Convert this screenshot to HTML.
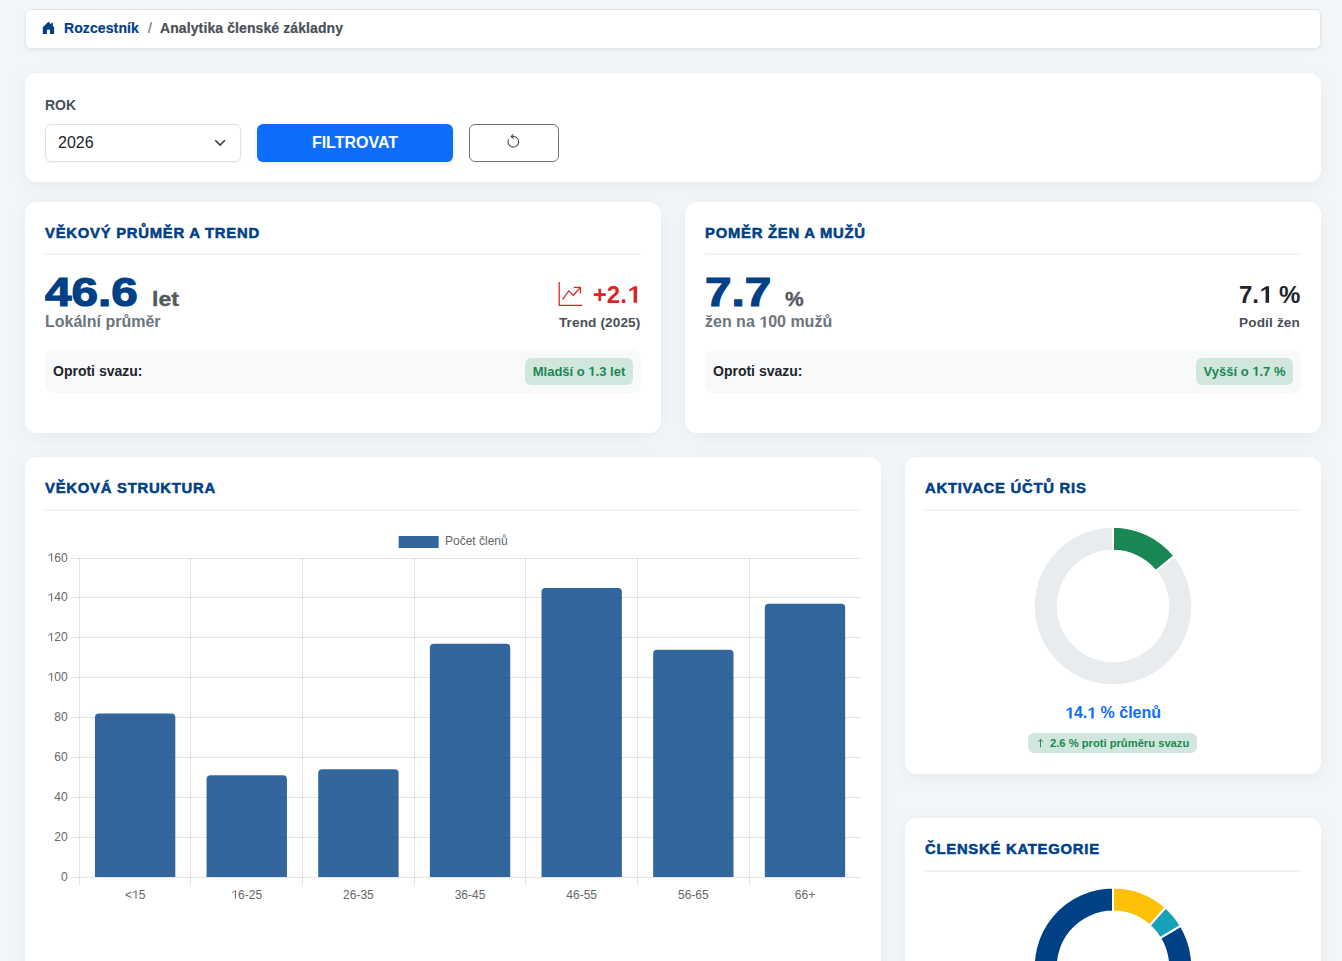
<!DOCTYPE html>
<html lang="cs">
<head>
<meta charset="utf-8">
<style>
*{box-sizing:border-box;margin:0;padding:0}
html,body{width:1342px;height:961px;overflow:hidden}
body{background:#f3f6f9;font-family:"Liberation Sans",sans-serif;color:#212529;position:relative}
.card{position:absolute;background:#fff;border-radius:12px;box-shadow:0 4px 20px rgba(0,0,0,0.05)}
.abs{position:absolute;white-space:nowrap}
.bc{left:25px;top:9px;width:1296px;height:40px;border-radius:6px;border:1px solid #e4e7eb;box-shadow:0 2px 4px rgba(0,0,0,0.05)}
.bc .t{font-size:14px;font-weight:bold;line-height:16px;top:11px;-webkit-text-stroke:0.2px currentColor;letter-spacing:0.1px}
.ttl{font-size:14px;font-weight:bold;color:#004085;letter-spacing:0.7px;line-height:17px;-webkit-text-stroke:0.5px #004085;transform:scaleX(1.06);transform-origin:0 0}
.sep{position:absolute;height:2px;background:#f1f4f7}
.big{font-weight:bold;color:#004085;font-size:40px;line-height:48px;-webkit-text-stroke:1.2px #004085;transform:scaleX(1.19);transform-origin:0 0}
.unit{font-weight:bold;color:#55595f;font-size:20px;line-height:24px;-webkit-text-stroke:0.4px #55595f;transform-origin:0 0}
.sub{font-size:16px;font-weight:bold;color:#6c757d;line-height:18px}
.gbox{position:absolute;background:#f8f9fa;border-radius:8px}
.badge{position:absolute;background:#d1e7dd;color:#198754;border-radius:6px;font-size:13px;font-weight:bold;line-height:27px;text-align:center}
.one{position:relative;color:transparent!important;-webkit-text-stroke:0!important}.one svg{position:absolute;left:0;top:0;width:0.556em;height:0.905em;overflow:visible}
</style>
</head>
<body>
<!-- breadcrumb -->
<div class="card bc">
  <svg class="abs" style="left:0;top:0;overflow:visible" width="40" height="40" viewBox="26 10 40 40"><path fill="#004085" d="M48.4 21.8 L42.8 27.2 V33.9 H46.9 V29.7 H50 V33.9 H54.1 V27.2 L52.9 26 V22.8 H51.4 V24.6 Z"/></svg>
  <span class="abs t" style="left:38px;top:10px;color:#004085">Rozcestník</span>
  <span class="abs t" style="left:122px;top:10px;color:#6c757d;font-weight:normal">/</span>
  <span class="abs t" style="left:134px;top:10px;color:#495057">Analytika členské základny</span>
</div>

<!-- filter -->
<div class="card" style="left:25px;top:73px;width:1296px;height:109px">
  <span class="abs" style="left:20px;top:24px;font-size:14px;font-weight:bold;color:#495057;line-height:16px">ROK</span>
  <div class="abs" style="left:20px;top:51px;width:196px;height:38px;border:1px solid #dee2e6;border-radius:6px;box-shadow:0 1px 2px rgba(0,0,0,0.05)">
    <span class="abs" style="left:12px;top:9px;font-size:16px;line-height:18px;color:#212529">2026</span>
    <svg class="abs" style="left:168px;top:14px" width="12" height="9" viewBox="0 0 12 9"><path d="M1.3 1.2L6.1 6.1L10.9 1.2" fill="none" stroke="#343a40" stroke-width="1.5"/></svg>
  </div>
  <div class="abs" style="left:232px;top:51px;width:196px;height:38px;background:#0d6efd;border-radius:6px;box-shadow:0 2px 4px rgba(0,0,0,0.08);color:#fff;font-weight:bold;font-size:16px;line-height:38px;text-align:center">FILTROVAT</div>
  <div class="abs" style="left:444px;top:51px;width:90px;height:38px;border:1px solid #6c757d;border-radius:6px">
    
  </div>
</div>

<!-- card age -->
<div class="card" style="left:25px;top:202px;width:636px;height:231px">
  <span class="abs ttl" style="left:20px;top:22.5px">VĚKOVÝ PRŮMĚR A TREND</span>
  <div class="sep" style="left:20px;top:51px;width:596px"></div>
  <span class="abs big" style="left:20px;top:65.5px">46.6</span>
  <span class="abs unit" style="left:127px;top:84.5px;transform:scaleX(1.15)">let</span>
  <span class="abs sub" style="left:20px;top:111px">Lokální průměr</span>
  
  <span class="abs" style="right:20.8px;top:79px;font-size:24px;font-weight:bold;color:#dc2626;line-height:28px">+2.<span class="one">1<svg viewBox="0 -1854 1139 1854"><path fill="#dc2626" d="M560 0H860V-1409H630L200-1140V-930L560-1150Z"/></svg></span></span>
  <span class="abs" style="right:20.6px;top:113px;font-size:13.6px;font-weight:bold;color:#495057;line-height:16px;letter-spacing:0.12px">Trend (2025)</span>
  <div class="gbox" style="left:20px;top:148px;width:596px;height:43px">
    <span class="abs" style="left:8px;top:13px;font-size:14px;font-weight:bold;line-height:16px;color:#212529">Oproti svazu:</span>
    <div class="badge" style="right:8px;top:8px;width:108px;height:27px">Mladší o <span class="one">1<svg viewBox="0 -1854 1139 1854"><path fill="#198754" d="M560 0H860V-1409H630L200-1140V-930L560-1150Z"/></svg></span>.3 let</div>
  </div>
</div>

<!-- card ratio -->
<div class="card" style="left:685px;top:202px;width:636px;height:231px">
  <span class="abs ttl" style="left:20px;top:22.5px">POMĚR ŽEN A MUŽŮ</span>
  <div class="sep" style="left:20px;top:51px;width:596px"></div>
  <span class="abs big" style="left:20px;top:65.5px">7.7</span>
  <span class="abs unit" style="left:100px;top:84.5px;transform:scaleX(1.05)">%</span>
  <span class="abs sub" style="left:20px;top:111px">žen na <span class="one">1<svg viewBox="0 -1854 1139 1854"><path fill="#6c757d" d="M560 0H860V-1409H630L200-1140V-930L560-1150Z"/></svg></span>00 mužů</span>
  <span class="abs" style="right:20.6px;top:79px;font-size:24px;font-weight:bold;color:#212529;line-height:28px">7.<span class="one">1<svg viewBox="0 -1854 1139 1854"><path fill="#212529" d="M560 0H860V-1409H630L200-1140V-930L560-1150Z"/></svg></span> %</span>
  <span class="abs" style="right:21px;top:113px;font-size:13.6px;font-weight:bold;color:#495057;line-height:16px;letter-spacing:0.15px">Podíl žen</span>
  <div class="gbox" style="left:20px;top:148px;width:596px;height:43px">
    <span class="abs" style="left:8px;top:13px;font-size:14px;font-weight:bold;line-height:16px;color:#212529">Oproti svazu:</span>
    <div class="badge" style="right:8px;top:8px;width:97px;height:27px">Vyšší o <span class="one">1<svg viewBox="0 -1854 1139 1854"><path fill="#198754" d="M560 0H860V-1409H630L200-1140V-930L560-1150Z"/></svg></span>.7 %</div>
  </div>
</div>

<!-- chart card -->
<div class="card" style="left:25px;top:457px;width:856px;height:560px">
  <span class="abs ttl" style="left:20px;top:22.5px">VĚKOVÁ STRUKTURA</span>
  <div class="sep" style="left:20px;top:52px;width:816px"></div>
</div>

<!-- activation card -->
<div class="card" style="left:905px;top:457px;width:416px;height:317px">
  <span class="abs ttl" style="left:20px;top:22.5px">AKTIVACE ÚČTŮ RIS</span>
  <div class="sep" style="left:20px;top:52px;width:376px"></div>
  <span class="abs" style="left:0;width:416px;text-align:center;top:247.3px;font-size:16px;font-weight:bold;color:#0d6efd;line-height:18px"><span class="one">1<svg viewBox="0 -1854 1139 1854"><path fill="#0d6efd" d="M560 0H860V-1409H630L200-1140V-930L560-1150Z"/></svg></span>4.<span class="one">1<svg viewBox="0 -1854 1139 1854"><path fill="#0d6efd" d="M560 0H860V-1409H630L200-1140V-930L560-1150Z"/></svg></span> % členů</span>
  <div class="abs" style="left:123px;top:276px;width:169px;height:20px;background:#d1e7dd;border-radius:6px;color:#198754;font-size:11.2px;font-weight:bold;line-height:20px">
    <svg class="abs" style="left:9px;top:4.5px" width="7" height="10" viewBox="0 0 7 10"><path d="M3.5 9.3V1.3M1 3.8L3.5 1.3L6 3.8" fill="none" stroke="#198754" stroke-width="0.95"/></svg>
    <span class="abs" style="left:22px;top:0">2.6 % proti průměru svazu</span></div>
</div>

<!-- categories card -->
<div class="card" style="left:905px;top:818px;width:416px;height:300px">
  <span class="abs ttl" style="left:20px;top:22.5px">ČLENSKÉ KATEGORIE</span>
  <div class="sep" style="left:20px;top:52px;width:376px"></div>
</div>

<svg class="ov" width="1342" height="961" viewBox="0 0 1342 961" style="position:absolute;left:0;top:0;z-index:5" font-family="Liberation Sans" font-size="12" fill="#666">
<g fill="none" stroke="#dc2626" stroke-width="1.3" stroke-linecap="butt">
<path d="M559.2 282 V305.3 H582.3"/>
<path d="M562.6 299.6 L568.7 290.9 L573.4 295.3 L580.2 287.6"/>
<path d="M573.8 287.3 H580.4 V293.6"/>
</g>
<g fill="none" stroke="#495057" stroke-width="1.1">
<path d="M508.7 139.3 A5.3 5.3 0 1 0 513.6 136.5"/>
<path d="M513.6 134.3 L511 136.5 L513.6 138.7 M511 136.5 H514"/>
</g>
<rect x="398.7" y="536" width="40" height="12" fill="rgba(0,64,133,0.8)"/>
<text x="445" y="545">Počet členů</text>
<rect x="71" y="558.0" width="789.8" height="1" fill="rgba(0,0,0,0.1)"/>
<text x="67.60" y="561.60" text-anchor="end"><tspan fill="transparent">1</tspan>60</text><path transform="translate(47.58 561.60) scale(0.005859)" d="M600 0H780V-1409H665L137-1100V-930L600-1230Z"/>
<rect x="71" y="597.0" width="789.8" height="1" fill="rgba(0,0,0,0.1)"/>
<text x="67.60" y="601.48" text-anchor="end"><tspan fill="transparent">1</tspan>40</text><path transform="translate(47.58 601.48) scale(0.005859)" d="M600 0H780V-1409H665L137-1100V-930L600-1230Z"/>
<rect x="71" y="637.0" width="789.8" height="1" fill="rgba(0,0,0,0.1)"/>
<text x="67.60" y="641.35" text-anchor="end"><tspan fill="transparent">1</tspan>20</text><path transform="translate(47.58 641.35) scale(0.005859)" d="M600 0H780V-1409H665L137-1100V-930L600-1230Z"/>
<rect x="71" y="677.0" width="789.8" height="1" fill="rgba(0,0,0,0.1)"/>
<text x="67.60" y="681.23" text-anchor="end"><tspan fill="transparent">1</tspan>00</text><path transform="translate(47.58 681.23) scale(0.005859)" d="M600 0H780V-1409H665L137-1100V-930L600-1230Z"/>
<rect x="71" y="717.0" width="789.8" height="1" fill="rgba(0,0,0,0.1)"/>
<text x="67.60" y="721.10" text-anchor="end">80</text>
<rect x="71" y="757.0" width="789.8" height="1" fill="rgba(0,0,0,0.1)"/>
<text x="67.60" y="760.98" text-anchor="end">60</text>
<rect x="71" y="797.0" width="789.8" height="1" fill="rgba(0,0,0,0.1)"/>
<text x="67.60" y="800.85" text-anchor="end">40</text>
<rect x="71" y="837.0" width="789.8" height="1" fill="rgba(0,0,0,0.1)"/>
<text x="67.60" y="840.73" text-anchor="end">20</text>
<rect x="71" y="877.0" width="789.8" height="1" fill="rgba(0,0,0,0.1)"/>
<text x="67.60" y="880.60" text-anchor="end">0</text>
<rect x="79.0" y="558.0" width="1" height="327.5" fill="rgba(0,0,0,0.1)"/>
<rect x="190.0" y="558.0" width="1" height="327.5" fill="rgba(0,0,0,0.1)"/>
<rect x="302.0" y="558.0" width="1" height="327.5" fill="rgba(0,0,0,0.1)"/>
<rect x="414.0" y="558.0" width="1" height="327.5" fill="rgba(0,0,0,0.1)"/>
<rect x="525.0" y="558.0" width="1" height="327.5" fill="rgba(0,0,0,0.1)"/>
<rect x="637.0" y="558.0" width="1" height="327.5" fill="rgba(0,0,0,0.1)"/>
<rect x="749.0" y="558.0" width="1" height="327.5" fill="rgba(0,0,0,0.1)"/>
<path d="M94.93 877.0 V717.51 Q94.93 713.51 98.93 713.51 H171.31 Q175.31 713.51 175.31 717.51 V877.0 Z" fill="rgba(0,64,133,0.8)"/>
<text x="135.12" y="898.80" text-anchor="middle">&lt;<tspan fill="transparent">1</tspan>5</text><path transform="translate(131.95 898.80) scale(0.005859)" d="M600 0H780V-1409H665L137-1100V-930L600-1230Z"/>
<path d="M206.57 877.0 V779.32 Q206.57 775.32 210.57 775.32 H282.96 Q286.96 775.32 286.96 779.32 V877.0 Z" fill="rgba(0,64,133,0.8)"/>
<text x="246.76" y="898.80" text-anchor="middle"><tspan fill="transparent">1</tspan>6-25</text><path transform="translate(231.42 898.80) scale(0.005859)" d="M600 0H780V-1409H665L137-1100V-930L600-1230Z"/>
<path d="M318.22 877.0 V773.34 Q318.22 769.34 322.22 769.34 H394.60 Q398.60 769.34 398.60 773.34 V877.0 Z" fill="rgba(0,64,133,0.8)"/>
<text x="358.41" y="898.80" text-anchor="middle">26-35</text>
<path d="M429.86 877.0 V647.73 Q429.86 643.73 433.86 643.73 H506.24 Q510.24 643.73 510.24 647.73 V877.0 Z" fill="rgba(0,64,133,0.8)"/>
<text x="470.05" y="898.80" text-anchor="middle">36-45</text>
<path d="M541.50 877.0 V591.91 Q541.50 587.91 545.50 587.91 H617.88 Q621.88 587.91 621.88 591.91 V877.0 Z" fill="rgba(0,64,133,0.8)"/>
<text x="581.69" y="898.80" text-anchor="middle">46-55</text>
<path d="M653.14 877.0 V653.71 Q653.14 649.71 657.14 649.71 H729.53 Q733.53 649.71 733.53 653.71 V877.0 Z" fill="rgba(0,64,133,0.8)"/>
<text x="693.34" y="898.80" text-anchor="middle">56-65</text>
<path d="M764.79 877.0 V607.86 Q764.79 603.86 768.79 603.86 H841.17 Q845.17 603.86 845.17 607.86 V877.0 Z" fill="rgba(0,64,133,0.8)"/>
<text x="804.98" y="898.80" text-anchor="middle">66+</text>
<path d="M1113.00 526.80 A79.2 79.2 0 0 1 1174.34 555.90 L1155.75 571.08 A55.2 55.2 0 0 0 1113.00 550.80 Z" fill="#198754" stroke="#fff" stroke-width="2"/>
<path d="M1174.34 555.90 A79.2 79.2 0 1 1 1113.00 526.80 L1113.00 550.80 A55.2 55.2 0 1 0 1155.75 571.08 Z" fill="#e9ecef" stroke="#fff" stroke-width="2"/>
<path d="M1113.00 887.60 A79.2 79.2 0 0 1 1165.58 907.57 L1149.65 925.52 A55.2 55.2 0 0 0 1113.00 911.60 Z" fill="#ffc107" stroke="#fff" stroke-width="2"/>
<path d="M1165.58 907.57 A79.2 79.2 0 0 1 1180.74 925.77 L1160.22 938.20 A55.2 55.2 0 0 0 1149.65 925.52 Z" fill="#17a2b8" stroke="#fff" stroke-width="2"/>
<path d="M1180.74 925.77 A79.2 79.2 0 1 1 1113.00 887.60 L1113.00 911.60 A55.2 55.2 0 1 0 1160.22 938.20 Z" fill="#004085" stroke="#fff" stroke-width="2"/>
</svg>
</body>
</html>
